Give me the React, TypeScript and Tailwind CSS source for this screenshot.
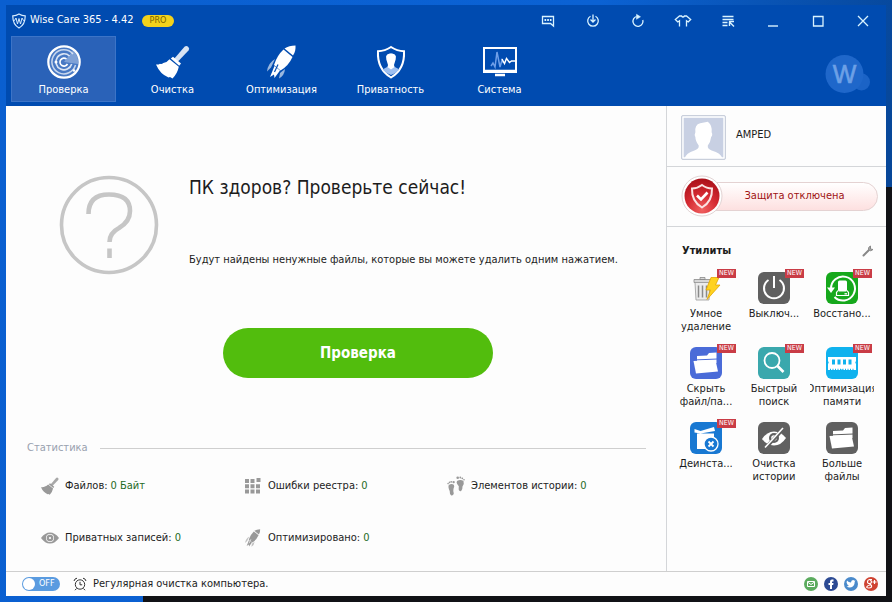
import clsx from "clsx";
import { ReactNode } from "react";

type IconProps = { className?: string };

function BroomIcon({ className }: IconProps) {
  return (
    <svg viewBox="0 0 34 34" className={className} fill="currentColor">
      <path d="M18 14 28.500 1.800q1.800-1.600 3.800.100 1.700 1.800.200 3.700L21.500 17z" opacity="0.85" />
      <path d="m14.800 13.500 2.200-1.800 8 6.700-1.800 2.400z" />
      <path d="M13.500 14.200 22.800 21.800Q21.500 28.500 16.500 33.500L14 32 12.500 32.500Q4 29 0 19.500q2.500.300 4-.800 1.600.800 3.300-.600 3.800-.800 6.200-3.900z" />
    </svg>
  );
}

function RocketIcon({ className, seam }: IconProps & { seam: string }) {
  return (
    <svg viewBox="0 0 34 34" className={className} fill="currentColor">
      <path d="M30.500.500Q24 .500 19.500 3.500L28 10.500Q31 6 30.500.500z" />
      <path d="M18.500 4.500Q12 10.500 9 20L15.500 25.500Q23.500 21 27.500 12z" />
      <path d="M10 14Q3 18 2 26.500L6 22.500zM20 24Q19.500 30.500 14 33.500L15 28z" opacity="0.6" />
      <path d="M9.500 21 5 32 9 29.500 9.500 33 15 25.500z" />
      <path d="M13 19.500 9.500 27" fill="none" stroke={seam} strokeWidth="1.200" />
    </svg>
  );
}

function RadarIcon() {
  return (
    <svg viewBox="0 0 34 34" className="size-[34px]" fill="none" stroke="#fff">
      <circle cx="17" cy="17" r="15.700" strokeWidth="2.200" fill="#8fb0e0" fillOpacity="0.3" />
      <path d="M17 17 26 5.500Q32 11 31 19z" fill="#fff" fillOpacity="0.3" stroke="none" />
      <path d="M26 9A12 12 0 1 0 28.500 20" strokeWidth="1.500" opacity="0.7" />
      <path d="M22.500 11A8 8 0 1 0 24.700 19" strokeWidth="1.600" opacity="0.8" />
      <path d="M19.500 14A4 4 0 1 0 20.500 19" strokeWidth="1.600" />
      <circle cx="9" cy="17" r="1.500" fill="#fff" stroke="none" />
      <circle cx="27" cy="25.500" r="1.300" fill="#fff" stroke="none" />
    </svg>
  );
}

function PrivacyIcon() {
  return (
    <svg viewBox="0 0 34 34" className="size-[34px]" fill="none">
      <path d="M17 2Q23 6 30 6.200 31 24 17 32.500 3 24 4 6.200 11 6 17 2z" stroke="#fff" strokeWidth="2" />
      <path d="M8.500 24.500 14 21.500Q15 20 14.500 18.500 12 15 12.200 11.500 13 8.500 17 8.500t4.800 3Q22 15 19.500 18.500 19 20 20 21.500L25.500 24.500Q22 28.500 17 30 12 28.500 8.500 24.500z" fill="#9dbff0" />
      <path d="M14 20Q12 15 12.200 11.500 13 8.500 17 8.500t4.800 3Q22 15 20 20l.500 2-3.500 2.500-3.500-2.500z" fill="#fff" />
    </svg>
  );
}

function MonitorIcon() {
  return (
    <svg viewBox="0 0 34 34" className="size-[34px]" fill="none">
      <path d="M1 3h32v24H1z" stroke="#fff" strokeWidth="2" />
      <path d="M1 26h32M12 30h10" stroke="#fff" strokeWidth="2.500" />
      <path d="m8 21 2-3 2 4 2-15 3 15 2-7 1.500 3" stroke="#6f9fe8" strokeWidth="1.500" />
      <path d="m19 14 2.500 4.500 2-5 3 4 2-1.500H33" stroke="#fff" strokeWidth="1.400" />
    </svg>
  );
}

function ShieldLogo() {
  return (
    <svg viewBox="0 0 14 16" className="h-4 w-3.5" fill="none" stroke="#d6ecff">
      <path d="M7 1Q10 2.800 13.200 2.800 13.400 11.500 7 15 .6 11.500.8 2.800 4 2.800 7 1z" strokeWidth="1.200" />
      <path d="M1 7.500h1.500L4 5l1.500 6L7 5.500 8.500 11 10 5l1.500 2.500H13" strokeWidth="1" />
    </svg>
  );
}

const TITLE_ACTIONS: { label: string; icon: ReactNode }[] = [
  {
    label: "Отзыв",
    icon: (
      <>
        <path d="M1.500 2.500h11v9.500l-3-2.500h-8z" />
        <path d="M3.500 6h7" strokeWidth="2" strokeDasharray="1.700 1" />
      </>
    ),
  },
  {
    label: "Обновить",
    icon: (
      <>
        <path d="M4.500 2.200A5.300 5.300 0 1 0 9.500 2.200" />
        <path d="M7 .5V8M4.500 5.500 7 8l2.500-2.500" />
      </>
    ),
  },
  {
    label: "Повторить",
    icon: (
      <>
        <path d="M5.500 2.500A5 5 0 1 0 11.800 6" />
        <path d="M5.500.3 9.500 2.800 5.500 5.300z" fill="currentColor" strokeWidth="0.500" />
      </>
    ),
  },
  {
    label: "Тема",
    icon: (
      <path d="M3.500 12.500V6.800L1.800 8-.7 5.500 3.500 2h2Q7 4 8.500 2h2l4.200 3.500L12.200 8 10.500 6.800V12.500" />
    ),
  },
  {
    label: "Меню",
    icon: (
      <>
        <path d="M1.500 2.500h11M1.500 5.500h11M1.500 8.500h5M1.500 11.500h5" />
        <path d="M8 7.500h5M8.500 7.500v4.500M8.500 8l4.500 4.500" strokeWidth="1.400" />
      </>
    ),
  },
  { label: "Свернуть", icon: <path d="M2 12h10" strokeWidth="1.400" /> },
  { label: "Развернуть", icon: <path d="M2.500 2.500h9.500v9.500H2.500z" /> },
  { label: "Закрыть", icon: <path d="m2 2 10 10M12 2 2 12" /> },
];

const TABS = [
  { label: "Проверка", icon: <RadarIcon />, active: true },
  { label: "Очистка", icon: <BroomIcon className="size-[34px]" /> },
  {
    label: "Оптимизация",
    icon: <RocketIcon className="size-[34px]" seam="#004bb0" />,
  },
  { label: "Приватность", icon: <PrivacyIcon /> },
  { label: "Система", icon: <MonitorIcon /> },
];

function Header() {
  return (
    <header className="bg-[#004bb0] px-[5px] text-white">
      <div className="flex h-[31px] items-center pl-px">
        <ShieldLogo />
        <h1 className="ml-1 text-[11px]">Wise Care 365 - 4.42</h1>
        <span className="ml-2 flex h-3 items-center rounded-full bg-[#f3d21b] px-2 text-[9px] text-[#7a6300]">
          PRO
        </span>
        <div className="ml-auto flex gap-[31px] pr-[11px] text-[#d9f3ff]">
          {TITLE_ACTIONS.map(({ label, icon }) => (
            <button key={label} aria-label={label}>
              <svg
                viewBox="0 0 14 14"
                className="size-3.5 overflow-visible"
                fill="none"
                stroke="currentColor"
                strokeWidth="1.300"
              >
                {icon}
              </svg>
            </button>
          ))}
        </div>
      </div>
      <div className="flex h-[70px] items-start">
        <nav className="flex gap-1">
          {TABS.map(({ label, icon, active }) => (
            <button
              key={label}
              className={clsx(
                "flex h-[66px] w-[105px] flex-col items-center gap-[3px] border pt-2",
                active
                  ? "border-[#3c74c7] bg-[#2a62b8]"
                  : "border-transparent"
              )}
            >
              {icon}
              <span className="text-[11px] leading-4">{label}</span>
            </button>
          ))}
        </nav>
        <svg viewBox="0 0 46 40" className="mt-[18px] mr-2.5 ml-auto h-10 w-[46px]">
          <circle cx="36.500" cy="28" r="8.500" fill="#1b63c6" />
          <circle cx="19.500" cy="20" r="19" fill="#1f67ca" />
          <text
            x="19.500"
            y="29"
            textAnchor="middle"
            fontSize="25"
            fill="#6da0e6"
            stroke="#6da0e6"
            strokeWidth="0.600"
            fontFamily="Liberation Sans, sans-serif"
          >
            W
          </text>
        </svg>
      </div>
    </header>
  );
}

const STATS = [
  {
    label: "Файлов:",
    value: "0 Байт",
    icon: <BroomIcon className="size-[18px]" />,
  },
  {
    label: "Ошибки реестра:",
    value: "0",
    icon: (
      <svg viewBox="0 0 16 16" className="size-4" fill="currentColor">
        <path d="M0 1h4v4H0zM5.500 1h4v4h-4zM11.500 0h4v4h-4zM0 6.300h4v4H0zM5.500 6.300h4v4h-4zM11 6.300h4v4h-4zM0 11.600h4v4H0zM5.500 11.600h4v4h-4zM11 11.600h4v4h-4z" />
      </svg>
    ),
  },
  {
    label: "Элементов истории:",
    value: "0",
    icon: (
      <svg viewBox="0 0 18 20" className="h-5 w-[18px]" fill="currentColor">
        <path d="M1.800 9Q4.500 7.300 6.800 8.800 7.800 10.500 6.500 12.800 6 14.500 6.800 17.500 6.300 19.800 4.300 19.500 2.500 18.500 2.700 15 .8 11 1.800 9z" />
        <path d="M10 5Q13.500 3 16.500 5 17.500 8 15.500 10.500 15.700 14 14 15.200 11.500 15.300 11.700 12.500 12.500 10 10.500 8.500 9 6.500 10 5z" />
        <circle cx="1.100" cy="7.600" r="0.800" />
        <circle cx="2.500" cy="6.400" r="0.800" />
        <circle cx="4.200" cy="5.800" r="0.900" />
        <circle cx="6.600" cy="6.100" r="1.200" />
        <circle cx="10.700" cy="1.800" r="1.300" />
        <circle cx="13.300" cy="1.500" r="0.900" />
        <circle cx="15.300" cy="2.300" r="0.900" />
        <circle cx="17" cy="3.700" r="0.800" />
      </svg>
    ),
  },
  {
    label: "Приватных записей:",
    value: "0",
    icon: (
      <svg viewBox="0 0 18 12" className="h-3 w-[18px]" fill="currentColor">
        <path
          fillRule="evenodd"
          d="M0 6Q4 .5 9 .5T18 6Q14 11.500 9 11.500T0 6zM9 2a4 4 0 1 0 0 8 4 4 0 0 0 0-8z"
        />
        <circle cx="9" cy="6" r="3.300" />
        <circle cx="9" cy="6" r="1.100" fill="#fff" />
      </svg>
    ),
  },
  {
    label: "Оптимизировано:",
    value: "0",
    icon: <RocketIcon className="size-[18px]" seam="#fff" />,
  },
];

function Statistics() {
  return (
    <section className="pr-5 pb-[23px] pl-[21px]">
      <div className="flex items-center gap-3">
        <h3 className="text-[11px] leading-4 text-gray-400">Статистика</h3>
        <div className="flex-1 border-t border-[#cfcfcf]" />
      </div>
      <dl className="mt-5 grid grid-cols-[203px_203px_1fr] gap-y-8 pl-3.5 text-[11px] leading-5">
        {STATS.map(({ label, value, icon }) => (
          <div key={label} className="flex items-center">
            <dt className="flex items-center">
              <span className="mr-1.5 flex w-[18px] justify-center text-[#999]">
                {icon}
              </span>
              {label}
            </dt>
            <dd className="ml-[3px] text-[#1f6b1f]">{value}</dd>
          </div>
        ))}
      </dl>
    </section>
  );
}

function Scan() {
  return (
    <main className="flex min-w-0 flex-1 flex-col">
      <div className="flex gap-[30px] pt-[69px] pl-[53px]">
        <svg viewBox="0 0 100 100" className="size-[100px]" fill="none" stroke="#c6c6c6">
          <circle cx="50" cy="50" r="47.500" strokeWidth="3.600" />
          <path
            d="M29.500 39Q29.500 19.500 50 19.500 71 19.500 71 36 71 46.500 60 53 50.500 58 50.500 67M50.500 73.500v9.500"
            strokeWidth="4.600"
          />
        </svg>
        <div>
          <h2 className="text-[19px] leading-6">ПК здоров? Проверьте сейчас!</h2>
          <p className="mt-[53px] text-[11px] leading-4">
            Будут найдены ненужные файлы, которые вы можете удалить одним
            нажатием.
          </p>
        </div>
      </div>
      <button className="mt-[53px] ml-[217px] h-[50px] w-[270px] rounded-full bg-[#52bd0d] text-[15px] font-bold text-white">
        Проверка
      </button>
      <div className="mt-auto">
        <Statistics />
      </div>
    </main>
  );
}

const UTILITIES = [
  {
    lines: ["Умное", "удаление"],
    color: "bg-transparent",
    isNew: true,
    icon: (
      <>
        <path d="M4 7.500h17v3H4zM10 5.500h5v2h-5z" fill="#d8d8d8" stroke="#8a8a8a" strokeWidth="0.800" />
        <path d="m5 10.500 1 17.500h13l1-17.500z" fill="#ececec" stroke="#999" strokeWidth="0.800" />
        <path d="M8.500 13.500v12M12.500 13.500v12M16.500 13.500v12" stroke="#8a8a8a" strokeWidth="1.500" />
        <path d="M21 5.500h8L25.500 13H30L17 27.500 20.500 18H16z" fill="#ffd21f" stroke="#e2a400" strokeWidth="0.800" />
      </>
    ),
  },
  {
    lines: ["Выключ..."],
    color: "bg-[#606060]",
    isNew: true,
    icon: (
      <path d="M10.500 8A10 10 0 1 0 21.500 8M16 4v12" fill="none" stroke="#fff" strokeWidth="2" />
    ),
  },
  {
    lines: ["Восстано..."],
    color: "bg-[#16a81c]",
    isNew: true,
    icon: (
      <g fill="none" stroke="#fff">
        <path d="M5 17A12 12 0 1 1 8.500 25" strokeWidth="2" />
        <path d="M1 15.500h8L5 21z" fill="#fff" stroke="none" />
        <rect x="12" y="8.500" width="9" height="11" rx="1.500" fill="#fff" stroke="none" />
        <path d="M12 18.500 10.500 20.500v3h12v-3L21 18.500" strokeWidth="1.200" />
        <path d="M18.500 21.800h2.500" strokeWidth="1.300" />
      </g>
    ),
  },
  {
    lines: ["Скрыть", "файл/па..."],
    color: "bg-[#4a6bd8]",
    isNew: true,
    icon: (
      <>
        <path d="M7 12.500V9L17 8.500l2-2.500 7.500-.500V16H7z" fill="#fff" />
        <path d="M3.500 13 27.500 12" stroke="#4a6bd8" strokeWidth="1.200" />
        <path d="M3.500 14 25.500 13 28 24.500 6 26.500z" fill="#fff" />
      </>
    ),
  },
  {
    lines: ["Быстрый", "поиск"],
    color: "bg-[#3aa8ad]",
    isNew: true,
    icon: (
      <g fill="none" stroke="#fff">
        <circle cx="14" cy="13.500" r="7.500" strokeWidth="1.800" />
        <path d="m19.500 19 6 6" strokeWidth="2.600" />
      </g>
    ),
  },
  {
    lines: ["Оптимизация", "памяти"],
    color: "bg-[#0fb2ee]",
    isNew: true,
    icon: (
      <>
        <path d="M2 10h28v4q-1.500 1.500 0 3v6H17l-1-1-1 1H2v-6q1.500-1.500 0-3z" fill="#fff" />
        <path d="M6 12.500h3v5H6zM11.500 12.500h3v5h-3zM17 12.500h3v5h-3zM22.500 12.500h3v5h-3z" fill="#0fb2ee" />
        <path d="M4 22.500h24" stroke="#0fb2ee" strokeWidth="1.500" strokeDasharray="1 1.500" />
      </>
    ),
  },
  {
    lines: ["Деинста..."],
    color: "bg-[#1878d2]",
    isNew: true,
    icon: (
      <>
        <path d="m4.500 7 6 2L24 5l1 4-14.500 2.500-6-1zM7 11.500h17V27H7z" fill="#fff" />
        <circle cx="21" cy="22" r="7" fill="#1878d2" stroke="#fff" strokeWidth="1.300" />
        <path d="m18.500 19.500 5 5M23.500 19.500l-5 5" stroke="#fff" strokeWidth="1.800" />
      </>
    ),
  },
  {
    lines: ["Очистка", "истории"],
    color: "bg-[#606060]",
    icon: (
      <>
        <path d="M4 17Q9 9.500 16 9.500T28 16Q23 23.500 16 23.500T4 17z" fill="#fff" />
        <circle cx="16" cy="16" r="5" fill="#606060" />
        <circle cx="16" cy="16" r="2.800" fill="#fff" />
        <path d="M8 25.500 26 6" stroke="#606060" strokeWidth="3.500" />
        <path d="M7 25.500 25 6" stroke="#fff" strokeWidth="1.600" />
      </>
    ),
  },
  {
    lines: ["Больше", "файлы"],
    color: "bg-[#606060]",
    icon: (
      <>
        <path d="M7 12.500V9L17 8.500l2-2.500 7.500-.500V16H7z" fill="#fff" />
        <path d="M3.500 13 27.500 12" stroke="#606060" strokeWidth="1.200" />
        <path d="M3.500 14 25.500 13 28 24.500 6 26.500z" fill="#fff" />
      </>
    ),
  },
];

function Utilities() {
  return (
    <section className="pt-4">
      <div className="flex items-center justify-between pr-3 pl-[15px]">
        <h3 className="text-[11px] leading-4 font-bold">Утилиты</h3>
        <button aria-label="Настроить">
          <svg viewBox="0 0 12 12" className="size-3" fill="none" stroke="#888">
            <path d="M1.500 10.500 7 5" strokeWidth="2" strokeLinecap="round" />
            <path d="M8.500 1Q6 2 6.500 4.500 8.500 7 11 4.500L8.500 4z" fill="#aaa" />
          </svg>
        </button>
      </div>
      <ul className="mt-[13px] grid grid-cols-3 gap-x-1 pr-3 pl-[7px]">
        {UTILITIES.map(({ lines, color, icon, isNew }) => (
          <li key={lines[0]} className="h-[75px]">
            <button className="relative flex w-full flex-col items-center">
              <span className={clsx("size-8 rounded-md", color)}>
                <svg viewBox="0 0 32 32" className="size-8">
                  {icon}
                </svg>
              </span>
              {isNew && (
                <span className="absolute -top-[3px] left-1/2 ml-[11px] bg-[#c93c46] px-0.5 text-[7px] leading-[9px] text-white">
                  NEW
                </span>
              )}
              <span className="mt-[3px] flex w-full flex-col items-center overflow-hidden text-[11px] leading-[13px]">
                {lines.map((line) => (
                  <span key={line} className="whitespace-nowrap">
                    {line}
                  </span>
                ))}
              </span>
            </button>
          </li>
        ))}
      </ul>
    </section>
  );
}

function Sidebar() {
  return (
    <aside className="w-[220px] shrink-0 border-l border-[#d4d6d9]">
      <div className="flex h-[61px] items-start gap-2.5 border-b border-[#d4d6d9] pt-[9px] pl-3.5">
        <svg
          viewBox="0 0 45 45"
          className="size-[45px] rounded-xs border border-[#c9cfdb] bg-[#c8d0e3]"
        >
          <path d="M1 1h43v43H1z" fill="none" stroke="#fff" strokeWidth="1.500" />
          <path
            d="M3 44Q4 39 13 36 18 35 17.500 31 14 26 14 22 12.500 20 14 17 13 9 19 7.500L27 6Q32 10 31 17 32.500 20 30.500 22 30 27 27 31 26.500 35 31 36 41 39 42 44z"
            fill="#fff"
          />
        </svg>
        <span className="mt-3 text-[11px] leading-4">AMPED</span>
      </div>
      <div className="h-[60px] border-b border-[#d4d6d9] pt-2 pr-2 pl-3.5">
        <button className="flex w-full items-center text-[11px] text-[#a01414]">
          <svg viewBox="0 0 42 42" className="relative size-[42px] shrink-0" fill="none">
            <defs>
              <radialGradient id="alarm" cx="0.5" cy="0.9" r="0.9">
                <stop offset="0" stopColor="#f06060" />
                <stop offset="0.5" stopColor="#d42a32" />
                <stop offset="1" stopColor="#a90f18" />
              </radialGradient>
            </defs>
            <circle cx="21" cy="21" r="20" fill="#fff" stroke="#e2d4d4" />
            <circle cx="21" cy="21" r="17.500" fill="url(#alarm)" />
            <path
              d="M21 10Q25.500 13.500 31 13.500 31.500 26.500 21 32.500 10.500 26.500 11 13.500 16.500 13.500 21 10z"
              stroke="#fbe3e3"
              strokeWidth="2"
            />
            <path d="m16 20.500 4 4 6.500-7" stroke="#fff" strokeWidth="2.600" />
          </svg>
          <span className="-ml-5 flex h-[29px] flex-1 items-center justify-center rounded-r-full border border-[#e4d2d2] bg-linear-to-b from-white to-[#fde0e0] pl-2">
            Защита отключена
          </span>
        </button>
      </div>
      <Utilities />
    </aside>
  );
}

const SOCIAL = [
  {
    label: "Почта",
    color: "#5bab5e",
    icon: <path d="M3.500 4.500h7v5h-7zM3.500 5 7 7.500 10.500 5" fill="none" stroke="#fff" />,
  },
  {
    label: "Facebook",
    color: "#2c4a93",
    icon: <path d="M6 12V8H4.500V6H6V4.500Q6 2.500 8 2.500h1.500v2H8.500Q8 4.500 8 5v1h1.500L9.200 8H8v4z" fill="#fff" />,
  },
  {
    label: "Twitter",
    color: "#4a8acb",
    icon: <path d="M3 3.500Q4.500 5.500 7 5.500 7 3 9 3q1 0 1.500.7l1-.2-.8 1.200Q10.700 10 6 10.500 4 10.500 2.500 9.500q1.500 0 2.500-.8-1.300-.2-1.700-1.400Q2 5.500 3 3.500z" fill="#fff" />,
  },
  {
    label: "Google+",
    color: "#cf4332",
    icon: (
      <path
        d="M8 2.500H5.500Q3.500 3 3.500 4.800T5.500 6.500 7.500 5 6 2.800M5.500 6.500 7.500 8.500Q8 11 5 11T3 9.500 6.500 8M10.500 3v4M8.500 5h4"
        fill="none"
        stroke="#fff"
        strokeWidth="1.200"
      />
    ),
  },
];

function StatusBar() {
  return (
    <footer className="flex h-[25px] shrink-0 items-center border-t border-[#cfcfcf] px-4">
      <label className="flex items-center text-[11px]">
        <input type="checkbox" role="switch" className="sr-only" />
        <span className="flex h-3.5 w-[38px] items-center gap-1 rounded-full bg-[#5a9be0] px-px text-[9px] text-white">
          <span className="size-3 rounded-full bg-white" />
          OFF
        </span>
        <svg viewBox="0 0 14 14" className="mr-1.5 ml-[13px] size-3.5" fill="none" stroke="#333">
          <circle cx="7" cy="7.500" r="4.700" />
          <path d="M7 4.800v3h2.200M1 4Q1.500 1.500 4 1.200M13 4Q12.500 1.500 10 1.200M3.500 11.500 2 13.200M10.500 11.500 12 13.200" />
        </svg>
        Регулярная очистка компьютера.
      </label>
      <div className="-mr-2 ml-auto flex gap-1.5">
        {SOCIAL.map(({ label, color, icon }) => (
          <a key={label} href="#" aria-label={label}>
            <svg viewBox="0 0 14 14" className="size-3.5">
              <circle cx="7" cy="7" r="7" fill={color} />
              {icon}
            </svg>
          </a>
        ))}
      </div>
    </footer>
  );
}

export default function App() {
  return (
    <div className="flex min-h-screen bg-[linear-gradient(#111216,#111216),linear-gradient(#111216,#111216),linear-gradient(100deg,#0a5fd0,#0b62d4_60%,#06408a)] bg-[length:84%_6px,6px_69%,100%_100%] bg-[position:right_bottom] bg-no-repeat p-1.5 pt-[5px] font-['DejaVu_Sans_Condensed','Noto_Sans',sans-serif] text-[#1c1c1c]">
      <div className="flex min-w-0 flex-1 flex-col bg-[#fdfdfd]">
        <Header />
        <div className="flex flex-1">
          <Scan />
          <Sidebar />
        </div>
        <StatusBar />
      </div>
    </div>
  );
}
